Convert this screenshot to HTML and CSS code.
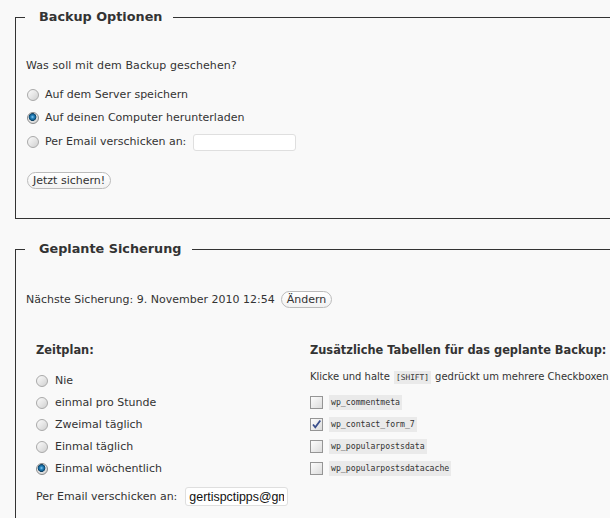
FILE: index.html
```html
<!DOCTYPE html>
<html lang="de">
<head>
    <meta charset="UTF-8">
    <title>Backup</title>
    <link rel="stylesheet" href="styles.css">
</head>
<body>
    <div class="page">
        <!-- Backup sofort -->
        <fieldset class="box box-now">
            <legend>Backup Optionen</legend>
            <p class="question">Was soll mit dem Backup geschehen?</p>
            <label class="opt first"><input type="radio" name="what"> Auf dem Server speichern</label>
            <label class="opt"><input type="radio" name="what" checked> Auf deinen Computer herunterladen</label>
            <label class="opt opt-mail"><input type="radio" name="what"> Per Email verschicken an: <input type="text" class="mail"></label>
            <div class="actions"><button class="pill">Jetzt sichern!</button></div>
        </fieldset>

        <!-- Geplante Sicherung -->
        <fieldset class="box box-plan">
            <legend>Geplante Sicherung</legend>
            <div class="next">Nächste Sicherung: 9. November 2010 12:54 <button class="pill">Ändern</button></div>

            <div class="cols">
                <div class="col-left">
                    <h3>Zeitplan:</h3>
                    <label class="opt first"><input type="radio" name="plan"> Nie</label>
                    <label class="opt"><input type="radio" name="plan"> einmal pro Stunde</label>
                    <label class="opt"><input type="radio" name="plan"> Zweimal täglich</label>
                    <label class="opt"><input type="radio" name="plan"> Einmal täglich</label>
                    <label class="opt"><input type="radio" name="plan" checked> Einmal wöchentlich</label>
                    <div class="plan-mail">Per Email verschicken an: <input type="text" class="mail mail-big" value="gertispctipps@gmail.com"></div>
                </div>
                <div class="col-right">
                    <h3>Zusätzliche Tabellen für das geplante Backup:</h3>
                    <p class="hint">Klicke und halte <code>[SHIFT]</code> gedrückt um mehrere Checkboxen</p>
                    <label class="tbl first"><input type="checkbox"> <code>wp_commentmeta</code></label>
                    <label class="tbl"><input type="checkbox" checked> <code>wp_contact_form_7</code></label>
                    <label class="tbl"><input type="checkbox"> <code>wp_popularpostsdata</code></label>
                    <label class="tbl"><input type="checkbox"> <code>wp_popularpostsdatacache</code></label>
                </div>
            </div>
        </fieldset>
    </div>
</body>
</html>
```

FILE: styles.css
```css
/* Global */
html, body {
    margin: 0;
    padding: 0;
    background: #f9f9f9;
    overflow: hidden;
}

body {
    font-family: "DejaVu Sans", Verdana, sans-serif;
    font-size: 11px;
    color: #333;
    line-height: 16px;
}

.page {
    padding: 9px 0 0 15px;
    width: 640px;
}

/* Fieldsets */
.box {
    border: 1px solid #333;
    margin: 0;
    padding: 0 0 0 10px;
    min-width: 0;
}

.box legend {
    font-size: 12.8px;
    font-weight: bold;
    line-height: 16px;
    padding: 0 11px 0 14px;
    margin-left: -1px;
    color: #333;
}

.box-now {
    padding-bottom: 29px;
}

.box-plan {
    margin-top: 22px;
    padding-bottom: 20px;
}

p {
    margin: 0;
}

.question {
    margin-top: 33px;
    letter-spacing: 0.1px;
}

/* Radio rows */
.opt {
    display: flex;
    align-items: center;
    height: 16px;
    margin-top: 7px;
}

.opt.first {
    margin-top: 13px;
}

.opt-mail {
    height: 18px;
}

input[type="radio"] {
    -webkit-appearance: none;
    appearance: none;
    width: 12px;
    height: 12px;
    margin: 0 6px 0 1px;
    border: 1px solid #a9a9a9;
    border-radius: 50%;
    background: linear-gradient(135deg, #fbfbfb 0%, #e4e4e4 55%, #cfcfcf 100%);
    box-sizing: border-box;
}

input[type="radio"]:checked {
    border-color: #8a8a8a;
    background:
        radial-gradient(circle at 45% 40%, #8fd0f5 0, #2a86c0 1.5px, #0f5a8a 3px, #0a3c5e 3.6px, transparent 4.2px),
        linear-gradient(135deg, #fbfbfb 0%, #e4e4e4 55%, #cfcfcf 100%);
}

input.mail {
    width: 103px;
    height: 17px;
    box-sizing: border-box;
    border: 1px solid #dfdfdf;
    border-radius: 3px;
    background: #fff;
    margin: 0 0 0 7px;
    padding: 0 3px;
    font-family: "Liberation Sans", Arial, sans-serif;
}

/* Buttons */
.actions {
    margin-top: 21px;
}

.pill {
    font-family: "DejaVu Sans", Verdana, sans-serif;
    font-size: 11px;
    color: #333;
    height: 17px;
    line-height: 13px;
    padding: 0 5px;
    border: 1px solid #bbb;
    border-radius: 11px;
    background: linear-gradient(#ffffff, #f2f2f2);
    margin: 0 0 0 1px;
}

/* Geplante Sicherung */
.next {
    display: flex;
    align-items: center;
    gap: 5px;
    height: 17px;
    margin-top: 34px;
}

.cols {
    display: grid;
    grid-template-columns: 284px 1fr;
    margin-top: 34px;
}

.col-left {
    padding-left: 10px;
}

h3 {
    margin: 0;
    font-size: 11.4px;
    line-height: 16px;
    font-weight: bold;
    white-space: nowrap;
}

.col-left .opt {
    margin-top: 6px;
}

.col-left .opt.first {
    margin-top: 15px;
}

.col-left input[type="radio"] {
    margin: 0 7px 0 0;
}

.plan-mail {
    display: flex;
    align-items: center;
    height: 19px;
    margin-top: 10px;
}

.plan-mail input.mail-big {
    height: 19px;
    margin-left: 8px;
    font-size: 12.4px;
    color: #111;
}

/* Tabellen */
.hint {
    margin-top: 11px;
    white-space: nowrap;
    font-size: 10px;
}

code {
    font-family: "DejaVu Sans Mono", monospace;
    font-size: 8.2px;
    background: #eaeaea;
    padding: 1px 2px;
    line-height: 13px;
    display: inline-block;
}

.hint code {
    padding: 0 2px;
    margin: 0 1px;
    font-size: 7.8px;
}

.tbl {
    display: flex;
    align-items: center;
    gap: 6px;
    height: 16px;
    margin-top: 6px;
}

.tbl.first {
    margin-top: 9px;
}

input[type="checkbox"] {
    -webkit-appearance: none;
    appearance: none;
    width: 13px;
    height: 13px;
    margin: 0;
    border: 1px solid #959595;
    box-sizing: border-box;
    background: linear-gradient(135deg, #fdfdfd 0%, #e9e9e9 60%, #dcdcdc 100%);
}

input[type="checkbox"]:checked {
    background:
        url("data:image/svg+xml,%3Csvg xmlns='http://www.w3.org/2000/svg' width='11' height='11' viewBox='0 0 11 11'%3E%3Cpath d='M2 5.5 L4.3 8.3 L9.3 1.5' fill='none' stroke='%233a4f8c' stroke-width='1.8'/%3E%3C/svg%3E") center / 11px 11px no-repeat,
        linear-gradient(135deg, #fdfdfd 0%, #e9e9e9 60%, #dcdcdc 100%);
}
```
